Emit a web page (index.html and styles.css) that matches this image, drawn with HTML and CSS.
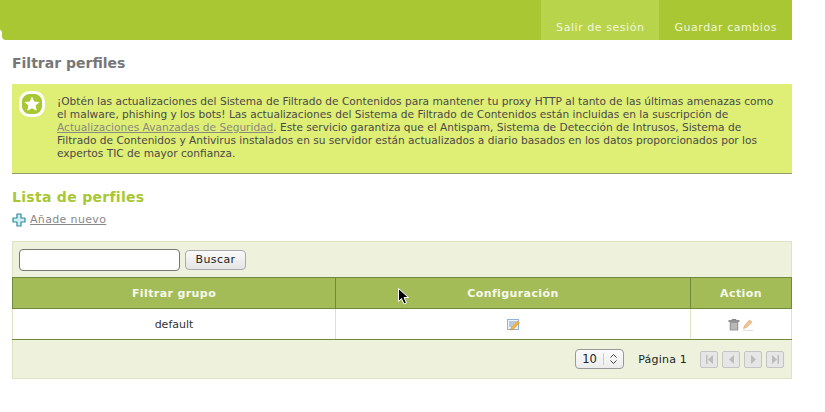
FILE: index.html
```html
<!DOCTYPE html>
<html lang="en">
<head>
    <meta charset="UTF-8">
    <title>Filtrar perfiles</title>
    <link rel="stylesheet" href="styles.css">
</head>
<body>
<div class="page">
    <div class="header">
        <a class="tab tab-light">Salir de sesión</a>
        <a class="tab">Guardar cambios</a>
    </div>

    <div class="content">
        <h1>Filtrar perfiles</h1>

        <div class="notice">
            <svg class="notice-icon" width="26" height="26" viewBox="0 0 26 26">
                <rect x="1.5" y="1.5" width="23" height="23" rx="9" fill="#a8c733" stroke="#fff" stroke-width="3"/>
                <polygon points="13,5.5 15.2,10.4 20.5,11 16.6,14.6 17.7,19.8 13,17.2 8.3,19.8 9.4,14.6 5.5,11 10.8,10.4" fill="#fff"/>
            </svg>
            <p>¡Obtén las actualizaciones del Sistema de Filtrado de Contenidos para mantener tu proxy HTTP al tanto de las últimas amenazas como el malware, phishing y los bots! Las actualizaciones del Sistema de Filtrado de Contenidos están incluidas en la suscripción de <a>Actualizaciones Avanzadas de Seguridad</a>. Este servicio garantiza que el Antispam, Sistema de Detección de Intrusos, Sistema de Filtrado de Contenidos y Antivirus instalados en su servidor están actualizados a diario basados en los datos proporcionados por los expertos TIC de mayor confianza.</p>
        </div>

        <h2>Lista de perfiles</h2>

        <div class="add-row">
            <svg width="14" height="14" viewBox="0 0 14 14">
                <path d="M5 1h4v4h4v4H9v4H5V9H1V5h4z" fill="#d3eef2" stroke="#2f8b9c" stroke-width="1.2" stroke-linejoin="round"/>
            </svg>
            <a>Añade nuevo</a>
        </div>

        <div class="grid-box">
            <div class="search-bar">
                <input class="search-input" type="text">
                <button class="search-btn">Buscar</button>
            </div>
            <table class="grid">
                <thead>
                    <tr>
                        <th class="col-group">Filtrar grupo</th>
                        <th class="col-conf">Configuración</th>
                        <th class="col-action">Action</th>
                    </tr>
                </thead>
                <tbody>
                    <tr>
                        <td>default</td>
                        <td>
                            <svg class="icon" width="13" height="12" viewBox="0 0 13 12">
                                <rect x="0.5" y="0.5" width="11" height="10" fill="#eef4fb" stroke="#8fb2dc"/>
                                <path d="M2 3h7M2 5h5M2 7h3" stroke="#7d9cc4"/>
                                <path d="M3.5 11l1-3 6-6 2 2-6 6z" fill="#f0b648" stroke="#c98a22" stroke-width="0.6"/>
                            </svg>
                        </td>
                        <td>
                            <svg class="icon" width="12" height="12" viewBox="0 0 12 12">
                                <path d="M0.5 2h11" stroke="#777" stroke-width="1.6"/>
                                <path d="M4 1.2V.5h4v.7" stroke="#888" fill="none"/>
                                <path d="M1.7 3h8.6v8.500H1.700z" fill="#9a9a9a"/>
                                <path d="M4 4v6.500M6 4v6.500M8 4v6.500" stroke="#d6d6d6"/>
                            </svg>
                            <svg class="icon" width="11" height="12" viewBox="0 0 11 12">
                                <path d="M0.500 9.500l1-3 5-5.500 2.500 2-5.500 5.500z" fill="#f3c391" stroke="#d9a066" stroke-width="0.6"/>
                                <path d="M0 11.300h10" stroke="#ddd"/>
                            </svg>
                        </td>
                    </tr>
                </tbody>
            </table>
            <div class="pager">
                <div class="page-size">
                    <span class="page-size-value">10</span>
                    <span class="page-size-arrows">
                        <svg width="9" height="12" viewBox="0 0 9 12">
                            <path d="M1.500 4.500L4.500 1.500l3 3M1.500 7.500l3 3 3-3" fill="none" stroke="#444"/>
                        </svg>
                    </span>
                </div>
                <span class="page-label">Página 1</span>
                <div class="page-btns">
                    <span class="page-btn"><svg width="9" height="9" viewBox="0 0 9 9"><path d="M1 0h1.500v9H1zM8 0v9L3 4.500z" fill="#bbb"/></svg></span>
                    <span class="page-btn"><svg width="9" height="9" viewBox="0 0 9 9"><path d="M7 0v9L2 4.500z" fill="#bbb"/></svg></span>
                    <span class="page-btn"><svg width="9" height="9" viewBox="0 0 9 9"><path d="M2 0v9l5-4.500z" fill="#bbb"/></svg></span>
                    <span class="page-btn"><svg width="9" height="9" viewBox="0 0 9 9"><path d="M1 0v9l5-4.500zM6.500 0H8v9H6.500z" fill="#bbb"/></svg></span>
                </div>
            </div>
        </div>
    </div>

    <svg class="cursor" width="12" height="18" viewBox="0 0 12 18">
        <path d="M0.500 0.500v13l3-3 2.500 5.500 2.500-1-2.500-5.500h4.500z" fill="#000" stroke="#fff" stroke-width="1"/>
    </svg>
</div>
</body>
</html>
```

FILE: styles.css
```css
html, body {
    margin: 0;
    padding: 0;
    background-color: #fff;
}
body {
    font-family: 'DejaVu Sans', sans-serif;
    font-size: 11px;
    color: #333;
}
.page {
    position: relative;
    width: 792px;
    height: 412px;
    overflow: hidden;
}
.header {
    display: flex;
    justify-content: flex-end;
    height: 40px;
    margin-left: 2px;
    background-color: #a8c733;
    border-radius: 8px 0 0 4px;
    border-top-left-radius: 0;
    box-shadow: -2px -8px 0 0 #a8c733;
}
.tab {
    display: block;
    padding: 20px 15px 0;
    height: 20px;
    line-height: 15px;
    color: #f1f6dc;
    font-size: 11px;
    letter-spacing: 0.55px;
}
.tab-light {
    background-color: #b8d44a;
}
.content {
    padding: 0 0 0 12px;
}
h1 {
    margin: 14px 0 12px;
    height: 18px;
    line-height: 18px;
    font-size: 14px;
    color: #777;
}
.notice {
    display: flex;
    height: 89px;
    background-color: #dfee75;
    border-bottom: 1px solid #8f9a6a;
}
.notice-icon {
    flex: none;
    margin: 7px 0 0 7px;
}
.notice p {
    margin: 11px 0 0 12px;
    width: 726px;
    line-height: 13px;
    font-size: 10.6px;
    color: #4a4a4a;
}
.notice a {
    color: #8a8a80;
    text-decoration: underline;
}
h2 {
    margin: 14px 0 7px;
    height: 18px;
    line-height: 18px;
    font-size: 14px;
    letter-spacing: 0.3px;
    color: #a8c733;
}
.add-row {
    display: flex;
    align-items: center;
    gap: 4px;
    height: 14px;
    line-height: 14px;
}
.add-row a {
    color: #888;
    text-decoration: underline;
    letter-spacing: 0.35px;
}
.grid-box {
    margin-top: 14px;
    background-color: #eef2dc;
    border: 1px solid #dde3c4;
    height: 136px;
}
.search-bar {
    display: flex;
    align-items: center;
    gap: 5px;
    height: 35px;
    padding-left: 6px;
    box-sizing: border-box;
    padding-top: 0;
}
.search-input {
    width: 161px;
    height: 22px;
    box-sizing: border-box;
    padding: 0;
    border: 1px solid #777;
    border-radius: 4px;
    background-color: #fff;
}
.search-btn {
    width: 61px;
    height: 20px;
    padding: 0;
    border: 1px solid #aaa;
    border-radius: 4px;
    background: linear-gradient(#fafafa, #e4e4e4);
    font-family: 'DejaVu Sans', sans-serif;
    font-size: 11px;
    letter-spacing: 0.4px;
    color: #222;
}
.grid {
    width: 780px;
    margin-left: -1px;
    border-collapse: collapse;
    table-layout: fixed;
    background-color: #fff;
}
.grid th {
    height: 30px;
    padding: 0;
    background-color: #a4bc58;
    border: 1px solid #6f8a3a;
    color: #f6f8ea;
    font-size: 11px;
    letter-spacing: 0.4px;
}
.col-group { width: 322px; }
.col-conf { width: 354px; }
.grid td {
    height: 30px;
    padding: 0;
    text-align: center;
    border-left: 1px solid #dde3c4;
    border-right: 1px solid #dde3c4;
    border-bottom: 1px solid #6f8a3a;
    color: #333;
}
.icon {
    vertical-align: middle;
}
.pager {
    display: flex;
    align-items: center;
    justify-content: flex-end;
    height: 38px;
    padding-right: 7px;
}
.page-size {
    display: flex;
    align-items: center;
    width: 49px;
    height: 20px;
    box-sizing: border-box;
    border: 1px solid #999;
    border-radius: 4px;
    background: linear-gradient(#fbfbfb, #ececec);
    color: #222;
}
.page-size-value {
    flex: 1;
    padding-left: 6px;
    font-size: 11.500px;
}
.page-size-arrows {
    display: flex;
    justify-content: center;
    width: 19px;
    border-left: 1px solid #ccc;
}
.page-label {
    margin: 0 13px 0 14px;
    color: #222;
    letter-spacing: 0.2px;
}
.page-btns {
    display: flex;
    gap: 4px;
}
.page-btn {
    display: flex;
    align-items: center;
    justify-content: center;
    width: 18px;
    height: 17px;
    box-sizing: border-box;
    border: 1px solid #c4c4c4;
    border-radius: 2px;
    background-color: #e6e6e6;
}
.cursor {
    position: absolute;
    left: 398px;
    top: 288px;
}
```
